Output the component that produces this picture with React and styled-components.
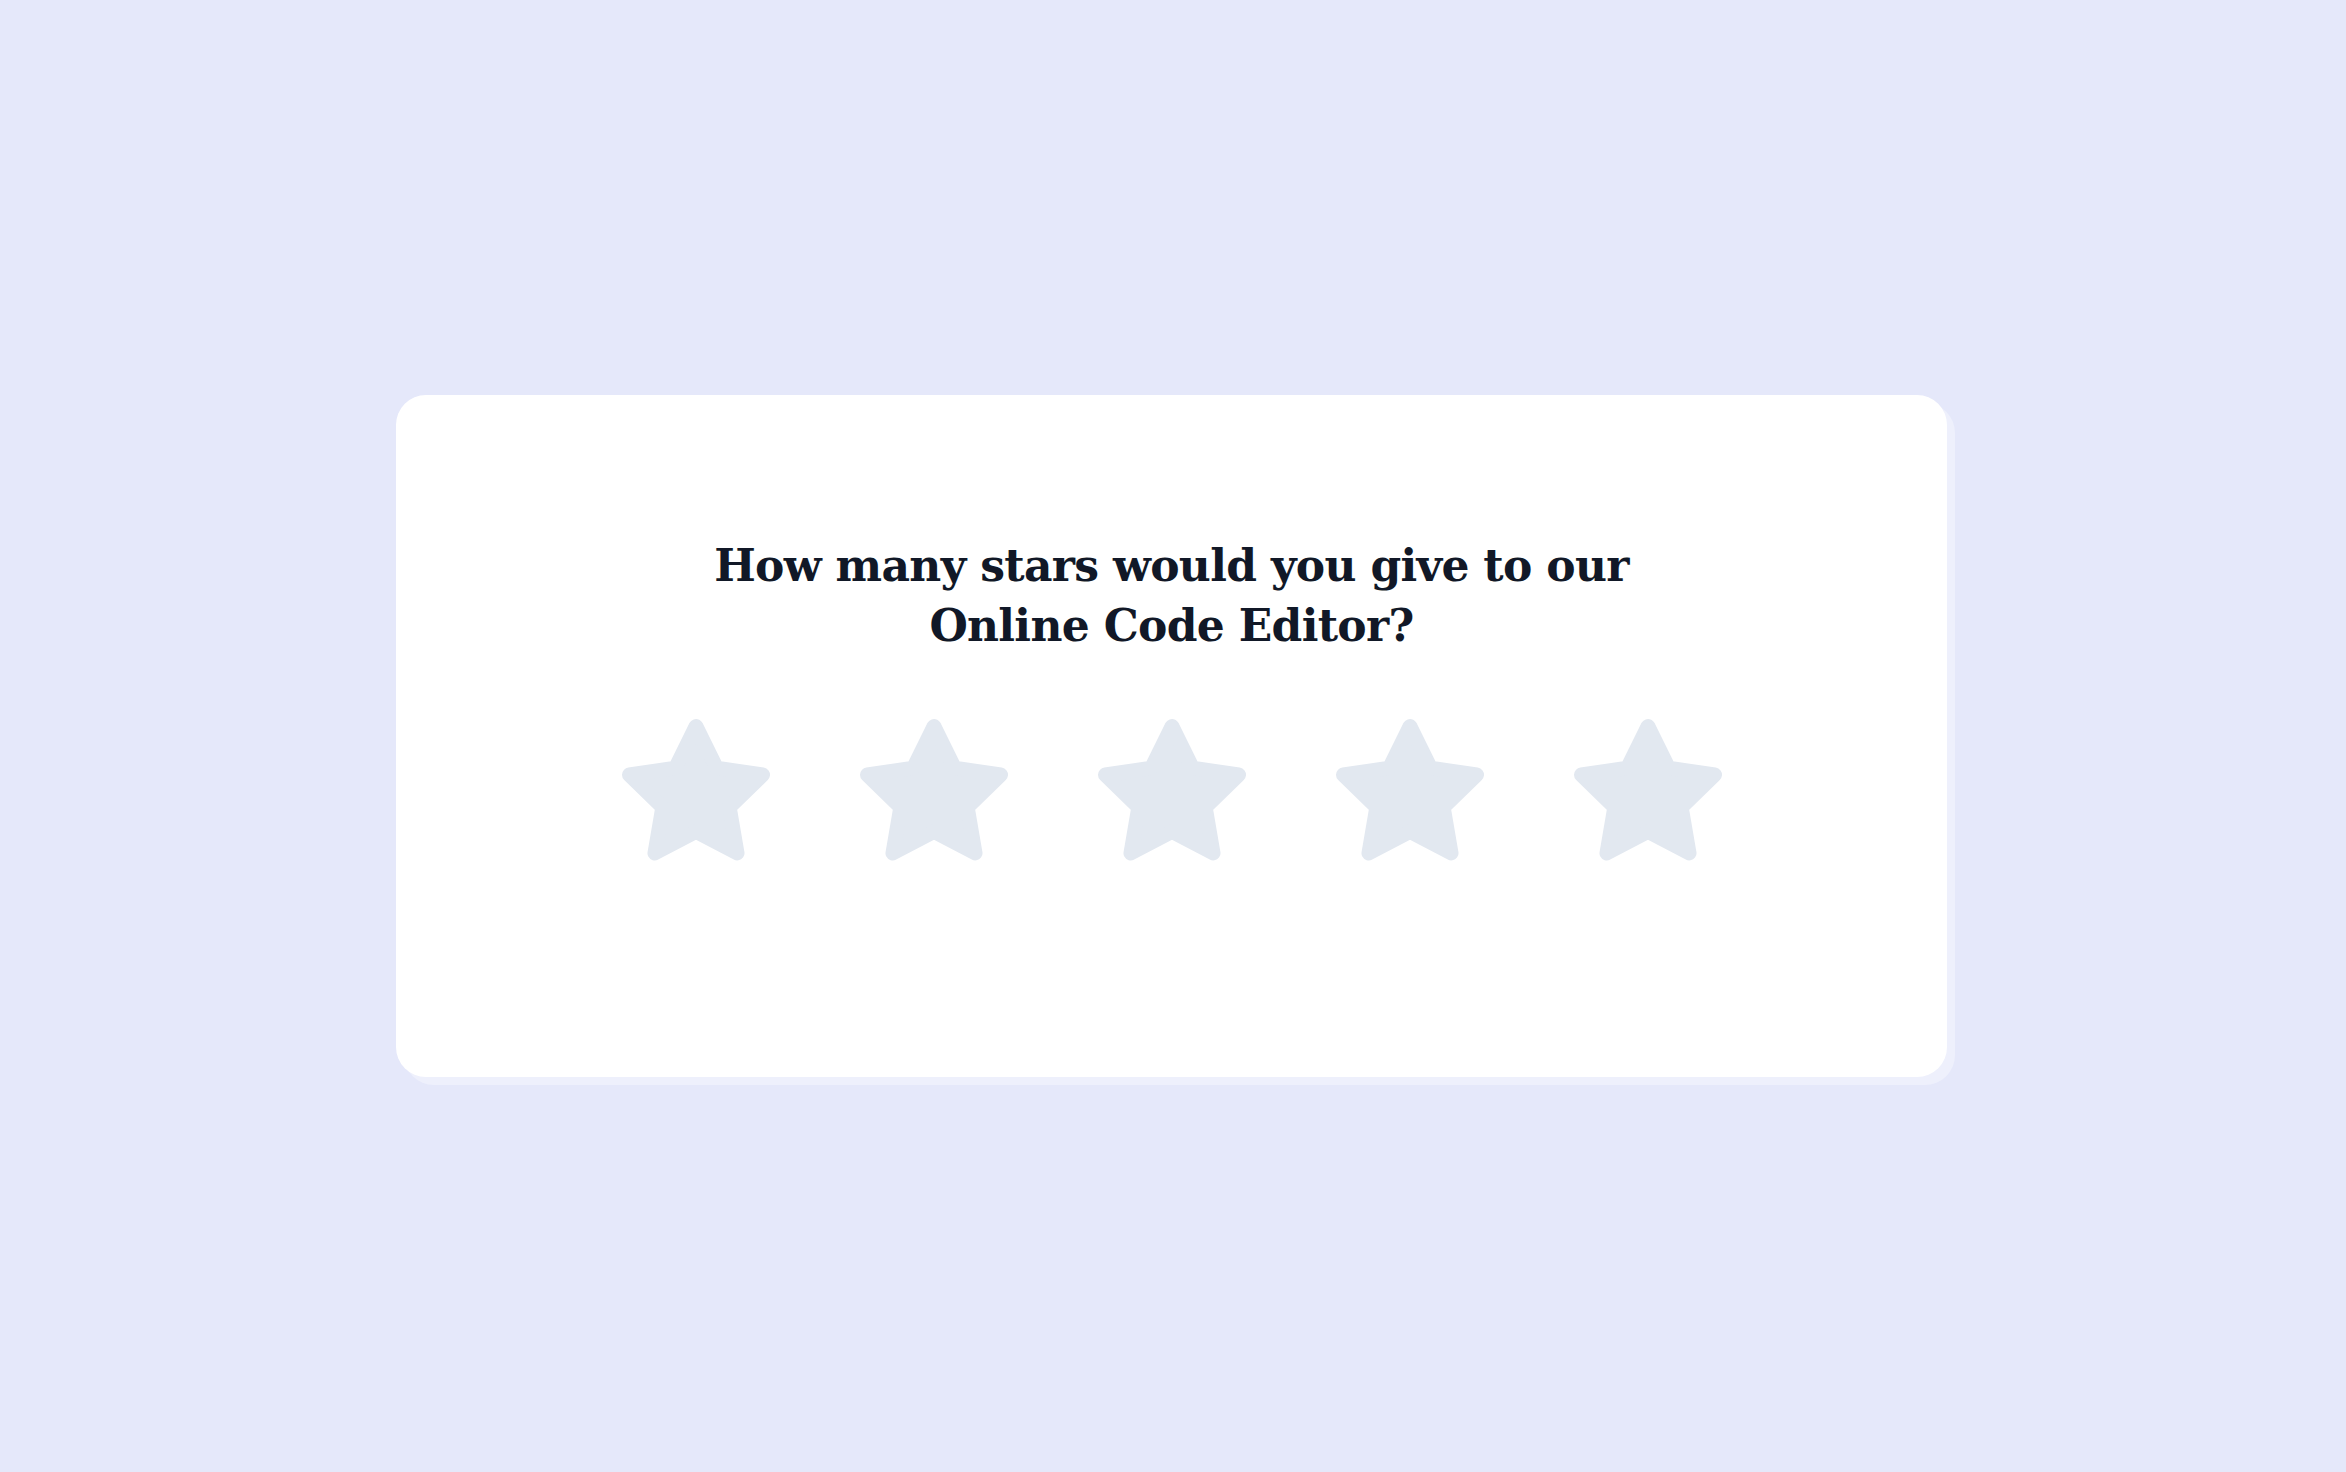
import React from "react";
import styled, { createGlobalStyle } from "styled-components";

const GlobalStyle = createGlobalStyle`
  html, body {
    margin: 0;
    padding: 0;
    background: #e5e8fa;
  }
  #root {
    min-height: 100vh;
  }
`;

const Page = styled.main`
  min-height: 100vh;
  display: flex;
  align-items: center;
  justify-content: center;
  background: #e5e8fa;
`;

const Card = styled.section`
  box-sizing: border-box;
  width: 1551px;
  height: 682px;
  margin-right: 3px;
  padding-top: 141px;
  background: #ffffff;
  border-radius: 30px;
  box-shadow: 8px 8px 0 #eef0fc;
  display: flex;
  flex-direction: column;
  align-items: center;
`;

const Title = styled.h1`
  margin: 0;
  font-family: "DejaVu Serif", "Liberation Serif", serif;
  font-weight: 700;
  font-size: 44px;
  line-height: 60px;
  letter-spacing: -0.68px;
  color: #111827;
  text-align: center;
`;

const Stars = styled.div`
  display: flex;
  gap: 78px;
  margin-top: 57px;
`;

const StarButton = styled.button`
  display: block;
  width: 160px;
  height: 160px;
  padding: 0;
  border: 0;
  background: none;
  cursor: pointer;
  color: ${(p) => (p.$active ? "#facc15" : "#e2e8f0")};
  svg {
    display: block;
    width: 100%;
    height: 100%;
  }
`;

const Star = () => (
  <svg viewBox="0 0 24 24" aria-hidden="true">
    <polygon
      points="12 2 15.09 8.26 22 9.27 17 14.14 18.18 21.02 12 17.77 5.82 21.02 7 14.14 2 9.27 8.91 8.26 12 2"
      fill="currentColor"
      stroke="currentColor"
      strokeWidth="2.2"
      strokeLinejoin="round"
    />
  </svg>
);

export default function App() {
  return (
    <>
      <GlobalStyle />
      <Page>
        <Card>
          <Title>
            How many stars would you give to our
            <br />
            Online Code Editor?
          </Title>
          <Stars>
            {[1, 2, 3, 4, 5].map((n) => (
              <StarButton key={n} aria-label={`${n} star`}>
                <Star />
              </StarButton>
            ))}
          </Stars>
        </Card>
      </Page>
    </>
  );
}
